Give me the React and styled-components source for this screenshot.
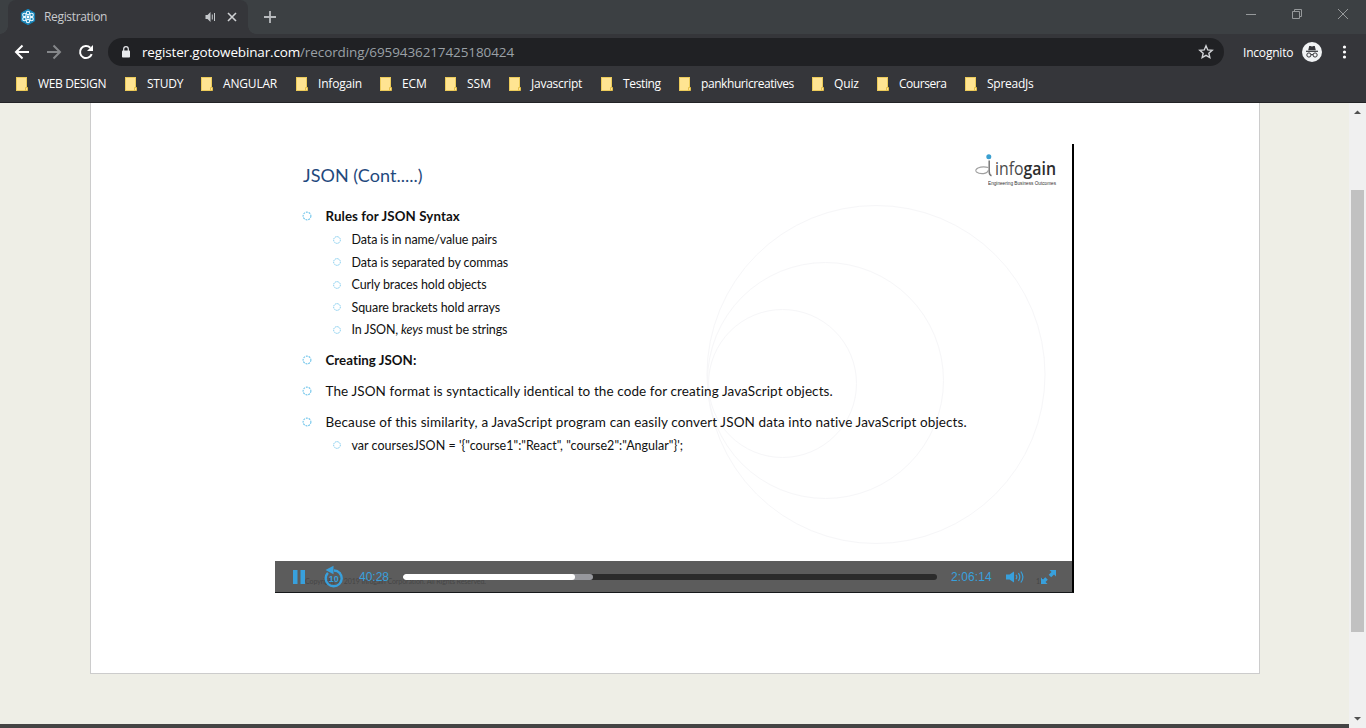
import React from 'react';
import styled, { createGlobalStyle } from 'styled-components';

const UI_FONT = '"Open Sans", "Noto Sans", sans-serif';
const SLIDE_FONT = 'Lato, "Open Sans", sans-serif';

const GlobalStyle = createGlobalStyle`
  * { box-sizing: border-box; }
  body { margin: 0; background: #eeeee6; overflow: hidden; }
`;

const Window = styled.div`
  width: 1366px;
  height: 728px;
  display: flex;
  flex-direction: column;
  overflow: hidden;
  font-family: ${UI_FONT};
`;

/* Browser chrome */
const TabStrip = styled.div`
  height: 34px;
  flex: none;
  display: flex;
  background: #3c4043;
  padding-left: 8px;
`;

const Tab = styled.div`
  position: relative;
  width: 240px;
  height: 34px;
  display: flex;
  align-items: center;
  background: #35363a;
  border-radius: 8px 8px 0 0;
  padding: 0 10px 0 12px;

  &::before,
  &::after {
    content: '';
    position: absolute;
    bottom: 0;
    width: 8px;
    height: 8px;
  }
  &::before {
    left: -8px;
    background: radial-gradient(circle at 0 0, #3c4043 7.5px, #35363a 8px);
  }
  &::after {
    right: -8px;
    background: radial-gradient(circle at 100% 0, #3c4043 7.5px, #35363a 8px);
  }
`;

const TabTitle = styled.span`
  flex: 1;
  margin-left: 8px;
  font-size: 12px;
  line-height: 16px;
  letter-spacing: -0.34px;
  color: #c8cacd;
`;

const TabIcon = styled.svg`
  display: block;
  flex: none;
  margin-left: ${(p) => p.$gap || 0}px;
`;

const WindowControls = styled.div`
  display: flex;
  gap: 36px;
  margin-left: auto;
  padding: 9px 18px 0 0;
`;

const Toolbar = styled.div`
  height: 36px;
  flex: none;
  display: flex;
  align-items: center;
  background: #35363a;
  padding: 0 13px 0 14px;
`;

const NavButtons = styled.div`
  display: flex;
  gap: 16px;
  width: 94px;
`;

const AddressBar = styled.div`
  width: 1116px;
  height: 28px;
  display: flex;
  align-items: center;
  background: #202124;
  border-radius: 14px;
  padding: 0 10px 0 13px;
`;

const Url = styled.div`
  flex: 1;
  margin-left: 11px;
  font-size: 13.5px;
  line-height: 20px;
  letter-spacing: -0.156px;
  color: #fff;
  white-space: nowrap;
`;

const UrlPath = styled.span`
  letter-spacing: -0.1px;
  color: #9aa0a6;
`;

const Profile = styled.div`
  display: flex;
  align-items: center;
  gap: 9px;
  margin-left: 19px;
  font-size: 12px;
  letter-spacing: -0.2px;
  color: #fff;
`;

const ToolIcon = styled.svg`
  display: block;
  flex: none;
`;

const MenuDots = styled(ToolIcon)`
  margin-left: auto;
`;

const Bookmarks = styled.div`
  height: 33px;
  flex: none;
  display: flex;
  align-items: flex-start;
  background: #35363a;
  border-bottom: 1px solid #222326;
  padding: 6px 0 0 16px;
`;

const Bookmark = styled.div`
  display: flex;
  align-items: center;
  gap: 10px;
  width: ${(p) => p.$width}px;
  height: 16px;
  font-size: 12px;
  letter-spacing: ${(p) => p.$track}px;
  line-height: 16px;
  color: #fff;
  white-space: nowrap;
`;

/* Web page */
const Viewport = styled.div`
  flex: 1;
  display: flex;
  min-height: 0;
`;

const Page = styled.div`
  width: 1349px;
  display: flex;
  flex-direction: column;
  align-items: center;
  justify-content: space-between;
  background: #eeeee6;
`;

const Panel = styled.main`
  width: 1170px;
  height: 571px;
  margin-left: 1px;
  background: #fff;
  border: 1px solid #ccc;
  border-top: 0;
  padding: 41px 0 0 184px;
`;

const FooterStrip = styled.div`
  width: 100%;
  height: 4px;
  background: #444;
`;

const Scrollbar = styled.div`
  width: 17px;
  display: flex;
  flex-direction: column;
  align-items: center;
  background: #f0f0f0;
`;

const ScrollArrow = styled.svg`
  display: block;
  flex: none;
  width: 17px;
  height: 17px;
  transform: ${(p) => (p.$down ? 'rotate(180deg)' : 'none')};
`;

const ScrollThumb = styled.div`
  width: 13px;
  height: 442px;
  margin: 70px 0 auto;
  background: #c1c1c1;
`;

/* Recording */
const Player = styled.section`
  position: relative;
  width: 799px;
  height: 449px;
  display: flex;
  flex-direction: column;
  background: #fff;
  border-right: 2px solid #000;
  border-bottom: 1px solid #16181a;
`;

const Slide = styled.div`
  position: relative;
  flex: 1;
  padding: 19px 0 0 27px;
  font-family: ${SLIDE_FONT};
  color: #111;
`;

const Rings = styled.svg`
  position: absolute;
  left: 425px;
  top: 54px;
`;

const SlideLogo = styled.div`
  position: absolute;
  left: 699px;
  top: 8px;
  width: 84px;
  height: 36px;
`;

const LogoMark = styled.svg`
  position: absolute;
  left: 0;
  top: 0;
`;

const LogoName = styled.div`
  position: absolute;
  left: 20.5px;
  top: 4px;
  font: 400 18.5px/24px "Open Sans", sans-serif;
  color: #4a4a4a;
  transform: scaleX(0.855);
  transform-origin: 0 0;
  white-space: nowrap;

  b { font-weight: 600; color: #2c2c2c; }
`;

const LogoTagline = styled.div`
  position: absolute;
  left: 14px;
  top: 25.5px;
  font: 6px/10px "Liberation Sans", sans-serif;
  color: #333;
  transform: scaleX(0.782);
  transform-origin: 0 0;
  white-space: nowrap;
`;

const SlideTitle = styled.h1`
  position: relative;
  margin: 0 0 13px;
  font-size: 18px;
  font-weight: 400;
  line-height: 24px;
  letter-spacing: 0.04px;
  color: #1f497d;
  padding-left: 1px;
`;

const Bullets = styled.ul`
  position: relative;
  list-style: none;
  margin: 0;
  padding: 0;
`;

const Bullet = styled.li`
  display: flex;
  align-items: center;
  height: ${(p) => (p.$sub ? 22.5 : 31)}px;
  margin-top: ${(p) => p.$shift || 0}px;
  padding-left: ${(p) => (p.$sub ? 31 : 0)}px;
  font-size: ${(p) => p.$size}px;
  font-weight: ${(p) => (p.$bold ? 700 : 400)};
  letter-spacing: ${(p) => p.$track}px;
  white-space: pre;

  svg { flex: none; margin-right: ${(p) => (p.$sub ? 10.5 : 13.5)}px; }
`;

const Copyright = styled.div`
  position: absolute;
  left: 30px;
  top: 432px;
  font: 7px/10px ${SLIDE_FONT};
  letter-spacing: -0.07px;
  color: #464646;
  white-space: nowrap;
`;

const SlideNumber = styled(Copyright)`
  left: 761px;
`;

const Controls = styled.div`
  height: 31px;
  flex: none;
  display: flex;
  align-items: center;
  background: #5c5c5c;
  padding: 0 16px 0 18px;
  font: 12px/16px "Liberation Sans", sans-serif;
  color: #38a0dc;

  & > * { position: relative; z-index: 1; }
`;

const ControlIcon = styled.svg`
  display: block;
  flex: none;
  margin-right: ${(p) => p.$gap || 0}px;
`;

const Elapsed = styled.span`
  width: 44px;
`;

const Track = styled.div`
  width: 535px;
  height: 6px;
  border-radius: 3px;
  background: #2b2b2b;
  overflow: hidden;
  margin-right: 14px;
`;

const Buffered = styled.div`
  width: 190px;
  height: 6px;
  border-radius: 3px;
  background: #97989d;
`;

const Played = styled.div`
  width: 172px;
  height: 6px;
  border-radius: 3px;
  background: #fff;
`;

const Duration = styled.span`
  width: 55px;
  letter-spacing: 0.1px;
`;

const bookmarks = [
  ['WEB DESIGN', 109, -0.36],
  ['STUDY', 76, -0.25],
  ['ANGULAR', 95, -0.18],
  ['Infogain', 84, -0.19],
  ['ECM', 65, -0.17],
  ['SSM', 64, 0],
  ['Javascript', 92, -0.25],
  ['Testing', 78, -0.36],
  ['pankhuricreatives', 133, -0.43],
  ['Quiz', 65, -0.15],
  ['Coursera', 88, -0.46],
  ['SpreadJs', 80, -0.25],
];

const bullets = [
  { text: 'Rules for JSON Syntax', bold: true, size: 13.3, track: 0.1 },
  { text: 'Data is in name/value pairs', sub: true, size: 12.5, track: -0.1, shift: -2.5 },
  { text: 'Data is separated by commas', sub: true, size: 12.5, track: -0.1 },
  { text: 'Curly braces hold objects', sub: true, size: 12.5, track: -0.1 },
  { text: 'Square brackets hold arrays', sub: true, size: 12.5, track: -0.07 },
  { text: <>In JSON, <em>keys</em> must be strings</>, sub: true, size: 12.5, track: -0.14 },
  { text: 'Creating JSON:', bold: true, size: 13.3, track: 0.03, shift: 3 },
  { text: 'The JSON format is syntactically identical to the code for creating JavaScript objects.', size: 13.5, track: 0.1 },
  { text: 'Because of this similarity, a JavaScript program can easily convert JSON data into native JavaScript objects.', size: 13.5, track: 0.12 },
  { text: 'var coursesJSON = \'{"course1":"React", "course2":"Angular"}\';', sub: true, size: 12.5, track: 0.02, shift: -3 },
];

const FolderIcon = () => (
  <ToolIcon width="12" height="14" viewBox="0 0 12 14">
    <rect x="0.5" y="0.5" width="10" height="13" fill="#ffe492" stroke="#eccb5a" />
    <path d="M9.5 13.5v-3h2v3z" fill="#ffe492" stroke="#e6c04a" />
  </ToolIcon>
);

const BulletRing = ({ sub }) => (
  <svg width={sub ? 8 : 10} height="10" viewBox="0 0 10 10">
    <circle cx="5" cy="5" r={sub ? 4.2 : 3.9} fill="none" stroke="#6cc3ea" strokeWidth="1.1" strokeDasharray="1.9 0.9" />
  </svg>
);

function BrowserChrome() {
  return (
    <>
      <TabStrip>
        <Tab>
          <TabIcon width="16" height="16" viewBox="0 0 16 16">
            <path d="M8 .3 14.6 4v8L8 15.7 1.4 12V4z" fill="#1684b8" stroke="#1684b8" strokeWidth="1" strokeLinejoin="round" />
            <g fill="none" stroke="#e8f7ff" strokeWidth="1.1">
              <circle cx="8" cy="3.9" r="1.7" />
              <circle cx="8" cy="12.1" r="1.7" />
              <circle cx="4.4" cy="5.9" r="1.7" />
              <circle cx="11.6" cy="5.9" r="1.7" />
              <circle cx="4.4" cy="10.1" r="1.7" />
              <circle cx="11.6" cy="10.1" r="1.7" />
            </g>
            <circle cx="8" cy="8" r="1.4" fill="#fff" />
          </TabIcon>
          <TabTitle>Registration</TabTitle>
          <TabIcon width="12" height="12" viewBox="0 0 12 12">
            <path d="M1.500 4h2l3-3v10l-3-3h-2z" fill="#c4c7ca" />
            <path d="M8.300 3.500v5M10.500 2v8" fill="none" stroke="#c4c7ca" strokeWidth="1" />
          </TabIcon>
          <TabIcon $gap={10} width="12" height="12" viewBox="0 0 12 12">
            <path d="m2 2 8 8M10 2l-8 8" stroke="#d0d2d4" strokeWidth="1.6" />
          </TabIcon>
        </Tab>
        <TabIcon $gap={16} width="12" height="34" viewBox="0 0 12 34">
          <path d="M0 17h12M6 11v12" stroke="#b8bbbe" strokeWidth="1.8" />
        </TabIcon>
        <WindowControls>
          <ToolIcon width="10" height="11" viewBox="0 0 10 11">
            <path d="M0 5.5h10" stroke="#96999b" />
          </ToolIcon>
          <ToolIcon width="10" height="10" viewBox="0 0 10 10">
            <path d="M.5 2.5h7v7h-7zM2.5 2.500V.5h7v7H7.500" fill="none" stroke="#96999b" />
          </ToolIcon>
          <ToolIcon width="10" height="10" viewBox="0 0 10 10">
            <path d="m0 0 10 10M10 0 0 10" stroke="#96999b" />
          </ToolIcon>
        </WindowControls>
      </TabStrip>
      <Toolbar>
        <NavButtons>
          <ToolIcon width="16" height="16" viewBox="0 0 16 16">
            <path d="M15 8H2.500M8.500 1.500 2 8l6.500 6.500" fill="none" stroke="#fff" strokeWidth="2" />
          </ToolIcon>
          <ToolIcon width="16" height="16" viewBox="0 0 16 16">
            <path d="M1 8h12.500M7.500 1.500 14 8l-6.500 6.500" fill="none" stroke="#85878a" strokeWidth="2" />
          </ToolIcon>
          <ToolIcon width="16" height="16" viewBox="0 0 16 16">
            <path d="M13.700 10.100A6 6 0 1 1 12.300 3.800" fill="none" stroke="#fff" strokeWidth="2" />
            <path d="M15 1v6H9z" fill="#fff" />
          </ToolIcon>
        </NavButtons>
        <AddressBar>
          <ToolIcon width="10" height="12" viewBox="0 0 10 12">
            <rect x="1" y="4.500" width="8" height="7" rx="0.800" fill="#e8eaed" />
            <path d="M2.700 5V3a2.300 2.300 0 0 1 4.600 0v2" fill="none" stroke="#e8eaed" strokeWidth="1.200" />
          </ToolIcon>
          <Url>register.gotowebinar.com<UrlPath>/recording/6959436217425180424</UrlPath></Url>
          <ToolIcon width="16" height="16" viewBox="0 0 16 16">
            <path d="m8 1.800 1.750 4.100 4.450.4-3.370 2.950 1 4.350L8 11.300l-3.830 2.300 1-4.350L1.800 6.300l4.450-.4z" fill="none" stroke="#d2d4d7" strokeWidth="1.400" />
          </ToolIcon>
        </AddressBar>
        <Profile>
          Incognito
          <ToolIcon width="20" height="20" viewBox="0 0 20 20">
            <circle cx="10" cy="10" r="10" fill="#f1f3f4" />
            <path d="M7.200 4h1.300l1.500.5 1.500-.5h1.300l1 4.200H6.200z" fill="#35363a" />
            <path d="M4 9.300h12" stroke="#35363a" strokeWidth="1.200" />
            <g fill="none" stroke="#35363a" strokeWidth="1">
              <circle cx="6.900" cy="13" r="2.100" />
              <circle cx="13.100" cy="13" r="2.100" />
              <path d="M9 12.800q1-.8 2 0" />
            </g>
          </ToolIcon>
        </Profile>
        <MenuDots width="16" height="16" viewBox="0 0 16 16">
          <g fill="#fff">
            <circle cx="7.500" cy="3" r="1.600" />
            <circle cx="7.500" cy="8" r="1.600" />
            <circle cx="7.500" cy="13" r="1.600" />
          </g>
        </MenuDots>
      </Toolbar>
      <Bookmarks>
        {bookmarks.map(([label, width, track]) => (
          <Bookmark key={label} $width={width} $track={track}>
            <FolderIcon />
            {label}
          </Bookmark>
        ))}
      </Bookmarks>
    </>
  );
}

function Recording() {
  return (
    <Player>
      <Slide>
        <Rings width="350" height="350" viewBox="0 0 350 350" fill="none" stroke="#f6f6f8">
          <circle cx="176" cy="176.500" r="169" />
          <circle cx="125.500" cy="182.500" r="118" />
          <circle cx="82.500" cy="185.500" r="74" />
        </Rings>
        <SlideLogo>
          <LogoMark width="22" height="28" viewBox="0 0 22 28">
            <circle cx="14.800" cy="4.800" r="2.500" fill="#3a9fd0" />
            <path d="M15.200 8.500v11q0 3.500 2.300 4.300" fill="none" stroke="#777" strokeWidth="1.500" />
            <path d="M14.500 15.500q-6-1.500-10.500.5-3.500 2-1.500 4 2.500 2 7 1.600 4-.6 5-3.600" fill="none" stroke="#a0a0a0" strokeWidth="1.100" />
          </LogoMark>
          <LogoName>info<b>gain</b></LogoName>
          <LogoTagline>Engineering Business Outcomes</LogoTagline>
        </SlideLogo>
        <SlideTitle>JSON (Cont.....)</SlideTitle>
        <Bullets>
          {bullets.map((b, i) => (
            <Bullet key={i} $sub={b.sub} $bold={b.bold} $size={b.size} $track={b.track} $shift={b.shift}>
              <BulletRing sub={b.sub} />
              <span>{b.text}</span>
            </Bullet>
          ))}
        </Bullets>
      </Slide>
      <Controls>
        <ControlIcon $gap={19} width="12" height="14" viewBox="0 0 12 14">
          <path d="M0 0h4.500v14H0zM7.500 0H12v14H7.500z" fill="#38a0dc" />
        </ControlIcon>
        <ControlIcon $gap={15} width="20" height="24" viewBox="0 0 20 24">
          <path d="M3.900 7.800A8 8 0 1 0 15.500 7.800" fill="none" stroke="#38a0dc" strokeWidth="2.400" />
          <path d="M10 5.500q3.500 0 6 2.700" fill="none" stroke="#38a0dc" strokeWidth="2.400" />
          <path d="M1.500 5 9.500.8v8.400z" fill="#38a0dc" />
          <text x="9.800" y="16.800" textAnchor="middle" fontFamily="Liberation Sans" fontWeight="700" fontSize="9" fill="#38a0dc">10</text>
        </ControlIcon>
        <Elapsed>40:28</Elapsed>
        <Track>
          <Buffered>
            <Played />
          </Buffered>
        </Track>
        <Duration>2:06:14</Duration>
        <ControlIcon $gap={17} width="18" height="14" viewBox="0 0 18 14">
          <path d="M0 4.500h3.500L8 1.500v11L3.500 9.500H0z" fill="#38a0dc" />
          <path d="M10 4.800q1.600 2.200 0 4.400M12.400 3.200q2.800 3.800 0 7.600M14.800 1.500q4.200 5.500 0 11" fill="none" stroke="#38a0dc" strokeWidth="1.200" />
        </ControlIcon>
        <ControlIcon width="15" height="14" viewBox="0 0 15 14">
          <path d="M8.500 0H15v6.500l-2-2-2.800 2.800-2.500-2.500L10.500 2zM0 7.500l2 2 2.300-2.300 2.500 2.500L4.500 12l2 2H0z" fill="#38a0dc" />
        </ControlIcon>
      </Controls>
      <Copyright>Copyright © 2019 Infogain Corporation. All Rights Reserved.</Copyright>
      <SlideNumber>16</SlideNumber>
    </Player>
  );
}

export default function App() {
  return (
    <Window>
      <GlobalStyle />
      <BrowserChrome />
      <Viewport>
        <Page>
          <Panel>
            <Recording />
          </Panel>
          <FooterStrip />
        </Page>
        <Scrollbar>
          <ScrollArrow viewBox="0 0 17 17">
            <path d="M5 11h7L8.500 7.500z" fill="#505050" />
          </ScrollArrow>
          <ScrollThumb />
          <ScrollArrow $down viewBox="0 0 17 17">
            <path d="M5 11h7L8.500 7.500z" fill="#505050" />
          </ScrollArrow>
        </Scrollbar>
      </Viewport>
    </Window>
  );
}
